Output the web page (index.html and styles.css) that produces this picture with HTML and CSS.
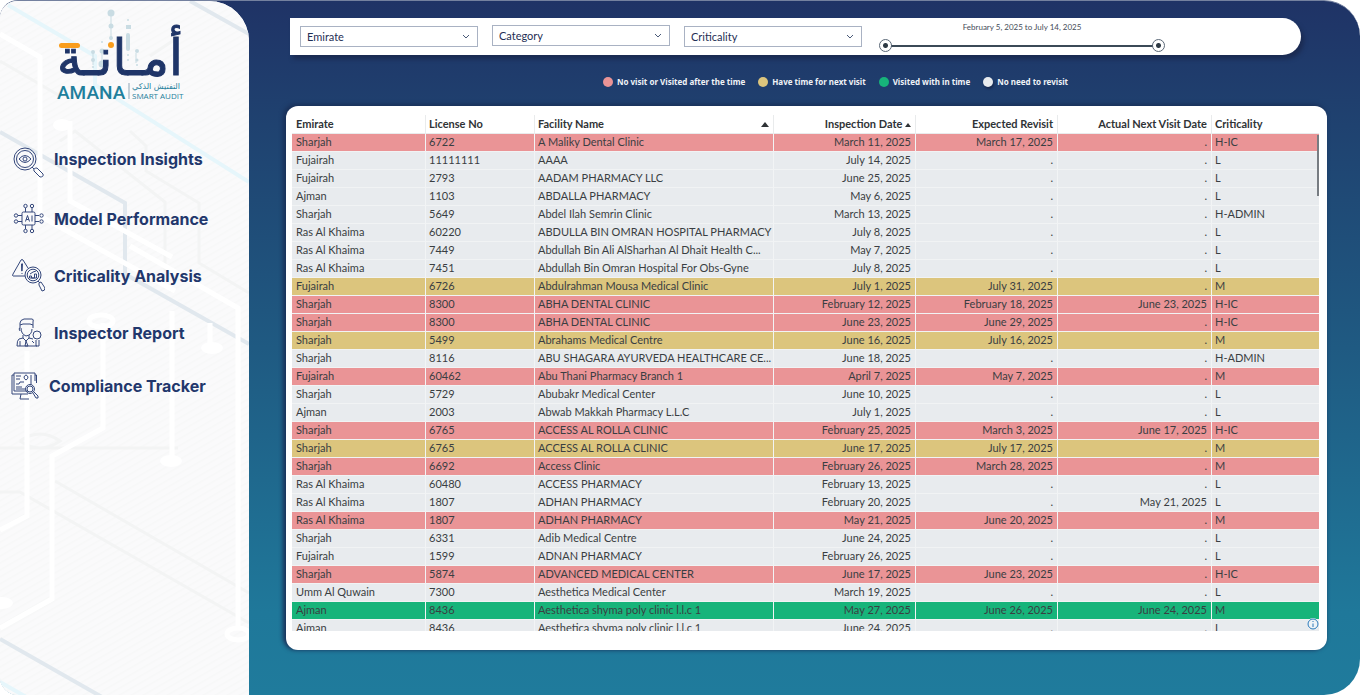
FILE: index.html
```html
<!DOCTYPE html>
<html lang="en">
<head>
<meta charset="utf-8">
<title>AMANA Smart Audit - Compliance Tracker</title>
<link rel="stylesheet" href="styles.css">
</head>
<body>
<div class="app">
  <aside class="sidebar">
    <svg class="backdrop" viewBox="0 0 249 695" preserveAspectRatio="xMinYMin slice" aria-hidden="true">
      <defs>
        <pattern id="hatch" width="6" height="6" patternUnits="userSpaceOnUse" patternTransform="rotate(60)">
          <path d="M0 0V6" stroke="#f7f8f8" stroke-width="3"/>
        </pattern>
      </defs>
      <rect width="249" height="695" fill="#fafafb"/>
      <rect width="249" height="695" fill="url(#hatch)"/>
      <g fill="none" stroke="#f3f4f4" stroke-width="3">
        <path d="M0 447H178M55 480L249 592M0 491H20L249 622M0 60L60 95M60 140L75 130L165 201V270M130 130L146 145V170L199 202V262L249 292M20 440q20-14 40 0q-20 14-40 0M150 55L180 35"/>
      </g>
      <g fill="none" stroke="#e1e8ee" stroke-width="4">
        <path d="M0 131L125 202V273L249 343M190 0L249 33M0 638L102 696"/>
      </g>
      <path d="M8 4L95 55V84L249 181M0 681L28 697" fill="none" stroke="#e6f6fb" stroke-width="4"/>
      <g fill="none" stroke="#fff" stroke-width="5">
        <path d="M0 33L40 56V215L175 290M70 120V200L172 256M130 245L238 307V625M27 350V515L0 529M103 322V427L52 455V598L0 627M172 310V457M210 322V345"/>
        <ellipse cx="238" cy="633" rx="11" ry="6"/>
        <ellipse cx="101" cy="320" rx="12" ry="6"/>
      </g>
      <g fill="#fff"><ellipse cx="171" cy="460" rx="11" ry="6"/><ellipse cx="212" cy="347" rx="11" ry="6"/><ellipse cx="2" cy="602" rx="11" ry="6"/><ellipse cx="62" cy="124" rx="9" ry="6"/></g>
    </svg>
    <svg class="logo" viewBox="0 0 132 96" role="img" aria-label="AMANA Smart Audit">
      <g fill="#c9dce3" stroke="#c9dce3">
        <path d="M56 5V32M38 44V57M47 45V58M81 45V55" stroke-width="1"/>
        <g stroke="none">
          <circle cx="56" cy="5" r="3.500"/><circle cx="56" cy="18" r="2.500"/><circle cx="56" cy="30" r="2"/>
          <circle cx="38" cy="44" r="2"/><circle cx="38" cy="52" r="2"/><circle cx="38" cy="59" r="1"/>
          <circle cx="47" cy="34" r="1"/><circle cx="47" cy="43" r="2.500"/><circle cx="47" cy="56" r="3.500"/>
          <circle cx="73" cy="12" r="1"/><rect x="71" y="17" width="5" height="4"/><rect x="71" y="25" width="4" height="18" rx="2"/><circle cx="73" cy="47" r="1"/><circle cx="73" cy="52" r="1"/>
          <circle cx="82" cy="43" r="2"/><circle cx="82" cy="52" r="1.500"/><circle cx="82" cy="57" r="1"/>
        </g>
      </g>
      <text class="logo-arabic" x="65" y="67" text-anchor="middle">أمـانـة</text>
      <rect x="4" y="35" width="21" height="5" rx="2.500" fill="#f99d1c"/>
      <circle cx="56" cy="37" r="3" fill="#f99d1c"/>
      <text class="logo-name" x="2" y="91">AMANA</text>
      <path d="M74 75V91" stroke="#8fa5b5" stroke-width="1"/>
      <text class="logo-sub-arabic" x="125" y="81" text-anchor="end" direction="ltr">التفتيش الذكي</text>
      <text class="logo-sub" x="77" y="91">SMART AUDIT</text>
    </svg>
    <nav class="nav">
      <a class="nav-link" href="#insights">
        <svg width="34" height="38" viewBox="11 140 34 38" aria-hidden="true">
          <circle cx="25" cy="159" r="11"/><circle cx="25" cy="159" r="8.500"/>
          <path d="M19 159q6-7 12 0q-6 7-12 0z"/><circle cx="25" cy="159" r="2"/>
          <path d="M32 167l2 2M34 171q-1-3 3-3l6 6q1 3-3 3z"/>
        </svg>
        <span>Inspection Insights</span>
      </a>
      <a class="nav-link" href="#model">
        <svg width="34" height="31" viewBox="11 204 34 31" aria-hidden="true">
          <rect x="22" y="213" width="13" height="13" rx="1.500"/>
          <path d="M25.500 222.500l2-6 2 6M26.200 220.500h2.600M32 216.500v6M25.500 213v-4M32 213v-4M25.500 226v4M32 226v4M22 216.500h-4M22 222.500h-4M35 216.500h4M35 222.500h4"/>
          <circle cx="25.500" cy="207" r="1.700"/><circle cx="32" cy="207" r="1.700"/><circle cx="25.500" cy="232" r="1.700"/><circle cx="32" cy="232" r="1.700"/>
          <circle cx="16" cy="216.500" r="1.700"/><circle cx="16" cy="222.500" r="1.700"/><circle cx="41.500" cy="216.500" r="1.700"/><circle cx="41.500" cy="222.500" r="1.700"/>
        </svg>
        <span>Model Performance</span>
      </a>
      <a class="nav-link" href="#criticality">
        <svg width="34" height="34" viewBox="11 259 34 34" aria-hidden="true">
          <path d="M25 276H13q-1 0 0-2l8-14q1-1 2 0l5 8M21.500 264q1-1 1 0l-.4 7h-.4zM22 273v1"/>
          <circle cx="33" cy="275" r="8"/><circle cx="33" cy="275" r="5.800"/>
          <path d="M29.500 278v-2h2v2h3v-4h2v4h-7M30 274l3-2 3-1M38 281l2 2M39 285q-1-3 2-3l4 6q0 3-3 3z"/>
        </svg>
        <span>Criticality Analysis</span>
      </a>
      <a class="nav-link" href="#inspector">
        <svg width="34" height="29" viewBox="11 318 34 29" aria-hidden="true">
          <path d="M20 328v-5q0-3 4-4h8q2 0 1 3v6M20 325l3-1h7l3 1M21 328q0 6 5 8q6-1 6-7M20 328q-2 0 0 3M23 335v3l-4 1q-2 1-2 7h20M29 335v3l4 1M23 338l3 3 3-3M26 341l-1 5h3zM20 341v5"/>
          <circle cx="37" cy="335" r="4"/><path d="M36 340v6h3v-6M32 341l2 2"/>
        </svg>
        <span>Inspector Report</span>
      </a>
      <a class="nav-link nav-link-compact" href="#compliance" aria-current="page">
        <svg width="28" height="28" viewBox="11 371 28 28" aria-hidden="true">
          <path d="M32 372H14v18h14M35 380v-8h-3M14 374h-2v19h16M35 374h1.500v8M21 393l-1 5h9M16 375h5M16 378h4M16 386h6M16 383h3l1-2h4M16 388h9M31 374v10M24 376q2-4 4 0q0 2-2 3q-2-1-2-3"/>
          <circle cx="30" cy="388" r="4.500"/><circle cx="30" cy="388" r="3"/><path d="M33 392l3 5h2v-2l-4-4"/>
        </svg>
        <span>Compliance Tracker</span>
      </a>
    </nav>
  </aside>

  <main class="main">
    <form class="filters">
      <div class="select">
        <select aria-label="Emirate"><option>Emirate</option></select>
        <svg viewBox="0 0 8 5" aria-hidden="true"><path d="M1 1l3 3 3-3"/></svg>
      </div>
      <div class="select select-raised">
        <select aria-label="Category"><option>Category</option></select>
        <svg viewBox="0 0 8 5" aria-hidden="true"><path d="M1 1l3 3 3-3"/></svg>
      </div>
      <div class="select">
        <select aria-label="Criticality"><option>Criticality</option></select>
        <svg viewBox="0 0 8 5" aria-hidden="true"><path d="M1 1l3 3 3-3"/></svg>
      </div>
      <div class="period">
        <output class="period-label">February 5, 2025 to July 14, 2025</output>
        <div class="range">
          <input type="range" min="0" max="159" value="0" aria-label="Start date">
          <input type="range" min="0" max="159" value="159" aria-label="End date">
        </div>
      </div>
    </form>

    <ul class="legend">
      <li class="legend-overdue">No visit or Visited after the time</li>
      <li class="legend-pending">Have time for next visit</li>
      <li class="legend-done">Visited with in time</li>
      <li class="legend-none">No need to revisit</li>
    </ul>

    <section class="panel">
      <div class="scroll">
        <table class="visits">
          <colgroup><col class="c-emirate"><col class="c-license"><col><col class="c-date"><col class="c-date"><col class="c-next"><col class="c-crit"></colgroup>
          <thead>
            <tr><th>Emirate</th><th>License No</th><th><span class="sorted">Facility Name <i class="arrow"></i></span></th><th>Inspection Date <i class="arrow arrow-small"></i></th><th>Expected Revisit</th><th>Actual Next Visit Date</th><th>Criticality</th></tr>
          </thead>
          <tbody>
            <tr class="overdue"><td>Sharjah</td><td>6722</td><td>A Maliky Dental Clinic</td><td>March 11, 2025</td><td>March 17, 2025</td><td>.</td><td>H-IC</td></tr>
            <tr><td>Fujairah</td><td>11111111</td><td>AAAA</td><td>July 14, 2025</td><td>.</td><td>.</td><td>L</td></tr>
            <tr><td>Fujairah</td><td>2793</td><td>AADAM PHARMACY LLC</td><td>June 25, 2025</td><td>.</td><td>.</td><td>L</td></tr>
            <tr><td>Ajman</td><td>1103</td><td>ABDALLA PHARMACY</td><td>May 6, 2025</td><td>.</td><td>.</td><td>L</td></tr>
            <tr><td>Sharjah</td><td>5649</td><td>Abdel Ilah Semrin Clinic</td><td>March 13, 2025</td><td>.</td><td>.</td><td>H-ADMIN</td></tr>
            <tr><td>Ras Al Khaima</td><td>60220</td><td>ABDULLA BIN OMRAN HOSPITAL PHARMACY</td><td>July 8, 2025</td><td>.</td><td>.</td><td>L</td></tr>
            <tr><td>Ras Al Khaima</td><td>7449</td><td>Abdullah Bin Ali AlSharhan Al Dhait Health C...</td><td>May 7, 2025</td><td>.</td><td>.</td><td>L</td></tr>
            <tr><td>Ras Al Khaima</td><td>7451</td><td>Abdullah Bin Omran Hospital For Obs-Gyne</td><td>July 8, 2025</td><td>.</td><td>.</td><td>L</td></tr>
            <tr class="pending"><td>Fujairah</td><td>6726</td><td>Abdulrahman Mousa Medical Clinic</td><td>July 1, 2025</td><td>July 31, 2025</td><td>.</td><td>M</td></tr>
            <tr class="overdue"><td>Sharjah</td><td>8300</td><td>ABHA DENTAL CLINIC</td><td>February 12, 2025</td><td>February 18, 2025</td><td>June 23, 2025</td><td>H-IC</td></tr>
            <tr class="overdue"><td>Sharjah</td><td>8300</td><td>ABHA DENTAL CLINIC</td><td>June 23, 2025</td><td>June 29, 2025</td><td>.</td><td>H-IC</td></tr>
            <tr class="pending"><td>Sharjah</td><td>5499</td><td>Abrahams Medical Centre</td><td>June 16, 2025</td><td>July 16, 2025</td><td>.</td><td>M</td></tr>
            <tr><td>Sharjah</td><td>8116</td><td>ABU SHAGARA AYURVEDA HEALTHCARE CE...</td><td>June 18, 2025</td><td>.</td><td>.</td><td>H-ADMIN</td></tr>
            <tr class="overdue"><td>Fujairah</td><td>60462</td><td>Abu Thani Pharmacy Branch 1</td><td>April 7, 2025</td><td>May 7, 2025</td><td>.</td><td>M</td></tr>
            <tr><td>Sharjah</td><td>5729</td><td>Abubakr Medical Center</td><td>June 10, 2025</td><td>.</td><td>.</td><td>L</td></tr>
            <tr><td>Ajman</td><td>2003</td><td>Abwab Makkah Pharmacy L.L.C</td><td>July 1, 2025</td><td>.</td><td>.</td><td>L</td></tr>
            <tr class="overdue"><td>Sharjah</td><td>6765</td><td>ACCESS AL ROLLA CLINIC</td><td>February 25, 2025</td><td>March 3, 2025</td><td>June 17, 2025</td><td>H-IC</td></tr>
            <tr class="pending"><td>Sharjah</td><td>6765</td><td>ACCESS AL ROLLA CLINIC</td><td>June 17, 2025</td><td>July 17, 2025</td><td>.</td><td>M</td></tr>
            <tr class="overdue"><td>Sharjah</td><td>6692</td><td>Access Clinic</td><td>February 26, 2025</td><td>March 28, 2025</td><td>.</td><td>M</td></tr>
            <tr><td>Ras Al Khaima</td><td>60480</td><td>ACCESS PHARMACY</td><td>February 13, 2025</td><td>.</td><td>.</td><td>L</td></tr>
            <tr><td>Ras Al Khaima</td><td>1807</td><td>ADHAN PHARMACY</td><td>February 20, 2025</td><td>.</td><td>May 21, 2025</td><td>L</td></tr>
            <tr class="overdue"><td>Ras Al Khaima</td><td>1807</td><td>ADHAN PHARMACY</td><td>May 21, 2025</td><td>June 20, 2025</td><td>.</td><td>M</td></tr>
            <tr><td>Sharjah</td><td>6331</td><td>Adib Medical Centre</td><td>June 24, 2025</td><td>.</td><td>.</td><td>L</td></tr>
            <tr><td>Fujairah</td><td>1599</td><td>ADNAN PHARMACY</td><td>February 26, 2025</td><td>.</td><td>.</td><td>L</td></tr>
            <tr class="overdue"><td>Sharjah</td><td>5874</td><td>ADVANCED MEDICAL CENTER</td><td>June 17, 2025</td><td>June 23, 2025</td><td>.</td><td>H-IC</td></tr>
            <tr><td>Umm Al Quwain</td><td>7300</td><td>Aesthetica Medical Center</td><td>March 19, 2025</td><td>.</td><td>.</td><td>L</td></tr>
            <tr class="done"><td>Ajman</td><td>8436</td><td>Aesthetica shyma poly clinic l.l.c 1</td><td>May 27, 2025</td><td>June 26, 2025</td><td>June 24, 2025</td><td>M</td></tr>
            <tr><td>Ajman</td><td>8436</td><td>Aesthetica shyma poly clinic l.l.c 1</td><td>June 24, 2025</td><td>.</td><td>.</td><td>L</td></tr>
          </tbody>
        </table>
        <span class="scroll-thumb"></span>
        <button class="info" type="button" aria-label="Information">
          <svg viewBox="0 0 12 12" aria-hidden="true"><circle cx="6" cy="6" r="5"/><path d="M6 5.500V9M6 3v1"/></svg>
        </button>
      </div>
    </section>
  </main>
</div>
</body>
</html>
```
FILE: styles.css
```css
* { box-sizing: border-box; }

body {
  margin: 0;
  background: #fff;
  color: #2f3336;
  font-family: Lato, "Noto Sans", sans-serif;
  font-size: 11px;
}

.app {
  display: flex;
  height: 100vh;
  margin-right: 5px;
  border-radius: 18px 36px 36px 18px;
  border-top: 1px solid #74819f;
  overflow: hidden;
  background: linear-gradient(#1f3366, #1f4270 18%, #1f5a82 50%, #1f789a 88%, #1f7b9c);
}

/* Sidebar */
.sidebar {
  position: relative;
  flex: 0 0 249px;
  border-radius: 0 40px 0 0;
  overflow: hidden;
  background: #fafafb;
}

.backdrop {
  position: absolute;
  inset: 0;
  width: 100%;
  height: 100%;
}

.logo {
  position: relative;
  display: block;
  width: 132px;
  height: 96px;
  margin: 7px 0 0 55px;
  overflow: visible;
}

.logo-arabic {
  font: 50px "DejaVu Sans", sans-serif;
  fill: #1f3568;
  stroke: #1f3568;
  stroke-width: 1;
}

.logo-name { font: 500 19px Roboto, sans-serif; fill: #1f7f9c; }
.logo-sub { font: 8px "Open Sans", sans-serif; fill: #1f7f9c; }
.logo-sub-arabic { font: 8px "DejaVu Sans", sans-serif; fill: #1f7f9c; }

.nav {
  position: relative;
  display: flex;
  flex-direction: column;
  gap: 25px;
  padding: 36px 11px 0;
}

.nav-link {
  display: flex;
  align-items: center;
  gap: 9px;
  color: #22376c;
  font: 700 16px/20px Inter, sans-serif;
  text-decoration: none;
}

.nav-link-compact { gap: 10px; }

.nav-link svg {
  flex: none;
  fill: none;
  stroke: #34477b;
  stroke-width: 1;
  stroke-linejoin: round;
}

/* Main area */
.main {
  flex: 1;
  min-width: 0;
  display: flex;
  flex-direction: column;
  padding: 17px 33px 45px 37px;
}

.filters {
  display: flex;
  align-items: center;
  gap: 14px;
  height: 37px;
  margin: 0 26px 0 4px;
  padding: 0 136px 0 10px;
  border-radius: 0 20px 20px 0;
  background: #fff;
  box-shadow: 3px 4px 4px #1b2b52;
}

.select {
  position: relative;
  flex: 0 1 178px;
}

.select-raised { padding-bottom: 2px; }

.select select {
  display: block;
  width: 100%;
  height: 21px;
  padding: 0 6px;
  appearance: none;
  border: 1px solid #a9b2c3;
  border-radius: 0;
  background: #fff;
  color: #1f2f55;
  font: 11px Lato, sans-serif;
}

.select svg {
  position: absolute;
  top: 8px;
  right: 8px;
  width: 8px;
  height: 5px;
  fill: none;
  stroke: #4a5a78;
  pointer-events: none;
}

.period {
  flex: 1;
  display: flex;
  flex-direction: column;
  align-items: center;
  gap: 6px;
  padding-left: 3px;
}

.period-label {
  color: #454c58;
  font-size: 8px;
  line-height: 12px;
}

.range {
  display: grid;
  width: 100%;
  align-items: center;
  background: linear-gradient(#3b4a57, #3b4a57) center / calc(100% - 14px) 2px no-repeat;
}

.range input {
  grid-area: 1 / 1;
  width: 100%;
  height: 13px;
  margin: 0;
  appearance: none;
  background: none;
  pointer-events: none;
}

.range input::-webkit-slider-thumb {
  appearance: none;
  width: 13px;
  height: 13px;
  border: 1px solid #5b6877;
  border-radius: 50%;
  background: radial-gradient(circle, #2d3944 2px, #fff 3px);
  pointer-events: auto;
}

.legend {
  display: flex;
  align-items: center;
  justify-content: center;
  gap: 13px;
  height: 51px;
  margin: 0;
  padding: 3px 0 0 58px;
  list-style: none;
  color: #f0f3f7;
  font: bold 8px/12px "Noto Sans", sans-serif;
}

.legend li {
  display: flex;
  align-items: center;
  gap: 4px;
  white-space: nowrap;
}

.legend li::before {
  content: "";
  width: 10px;
  height: 10px;
  border-radius: 50%;
  background: #e8ebee;
}

.legend .legend-overdue::before { background: #ea9496; }
.legend .legend-pending::before { background: #dcc57d; }
.legend .legend-done::before { background: #17b47a; }
.legend .legend-none::before { box-shadow: 1px 2px 2px #182a50; }

/* Table panel */
.panel {
  flex: 1;
  min-height: 0;
  display: flex;
  padding: 9px 8px 19px 6px;
  border-radius: 12px;
  background: #fff;
  box-shadow: -2px -1px 4px 1px #1a3058;
}

.scroll {
  position: relative;
  flex: 1;
  min-width: 0;
  overflow: hidden;
}

.visits {
  width: 100%;
  table-layout: fixed;
  border-collapse: separate;
  border-spacing: 0;
}

.c-emirate { width: 134px; }
.c-license { width: 109px; }
.c-date { width: 142px; }
.c-next { width: 154px; }
.c-crit { width: 107px; }

.visits th,
.visits td {
  height: 18px;
  padding: 0 4px 0 3px;
  overflow: hidden;
  border-right: 1px solid #f2f4f5;
  border-bottom: 1px solid #f1f3f4;
  line-height: 16px;
  text-align: left;
  vertical-align: top;
  white-space: nowrap;
}

.visits td:nth-child(3) { padding-right: 0; }

.visits th {
  height: 19px;
  border-color: #e9ebec;
  font-weight: bold;
  line-height: 18px;
}

.visits th:first-child,
.visits td:first-child { padding-left: 4px; }

.visits th:last-child,
.visits td:last-child { border-right: 0; }

.visits th:nth-child(n+4):nth-child(-n+6),
.visits td:nth-child(n+4):nth-child(-n+6) { text-align: right; }

.visits td { background: #e8ebee; color: #3a3e42; }
.visits .overdue td { background: #ea9496; }
.visits .pending td { background: #dcc57d; }
.visits .done td { background: #17b47a; }

.sorted {
  display: flex;
  align-items: center;
  justify-content: space-between;
}

.arrow {
  display: inline-block;
  border: solid transparent;
  border-width: 0 4px 5px;
  border-bottom-color: #2f3336;
}

.arrow-small {
  border-width: 0 3px 4px;
  vertical-align: 1px;
}

.scroll-thumb {
  position: absolute;
  top: 20px;
  right: 0;
  width: 2px;
  height: 61px;
  background: #777c82;
}

.info {
  position: absolute;
  right: 0;
  bottom: 1px;
  width: 12px;
  height: 12px;
  padding: 0;
  border: 0;
  border-radius: 50%;
  background: #eef3f7;
}

.info svg {
  display: block;
  fill: none;
  stroke: #2a78b8;
  stroke-width: 1;
}
```
